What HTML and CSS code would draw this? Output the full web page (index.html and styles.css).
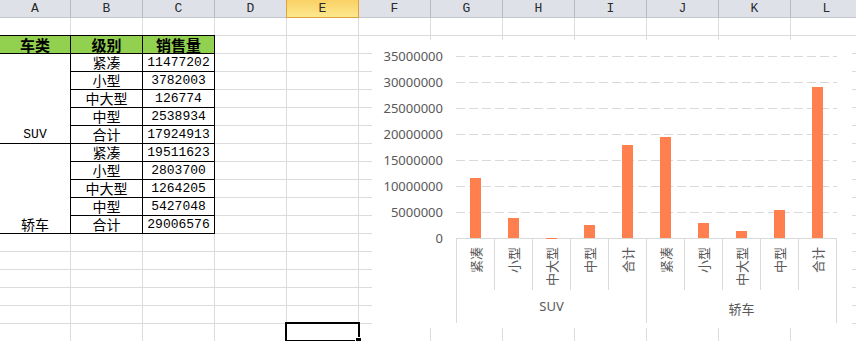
FILE: index.html
```html
<!DOCTYPE html>
<html lang="zh-CN">
<head>
  <meta charset="UTF-8">
  <meta name="viewport" content="width=device-width, initial-scale=1.0">
  <title>销售量</title>
  <link rel="stylesheet" href="styles.css">
</head>
<body>
  <div class="sheet">
    <div class="col-heads">
      <div class="ch first">A</div>
      <div class="ch">B</div>
      <div class="ch">C</div>
      <div class="ch">D</div>
      <div class="ch active">E</div>
      <div class="ch">F</div>
      <div class="ch">G</div>
      <div class="ch">H</div>
      <div class="ch">I</div>
      <div class="ch">J</div>
      <div class="ch">K</div>
      <div class="ch">L</div>
    </div>

    <div class="table">
      <div class="cell head">车类</div>
      <div class="cell head">级别</div>
      <div class="cell head">销售量</div>

      <div class="cell group latin">SUV</div>
      <div class="cell">紧凑</div><div class="cell num">11477202</div>
      <div class="cell">小型</div><div class="cell num">3782003</div>
      <div class="cell">中大型</div><div class="cell num">126774</div>
      <div class="cell">中型</div><div class="cell num">2538934</div>
      <div class="cell">合计</div><div class="cell num">17924913</div>

      <div class="cell group">轿车</div>
      <div class="cell">紧凑</div><div class="cell num">19511623</div>
      <div class="cell">小型</div><div class="cell num">2803700</div>
      <div class="cell">中大型</div><div class="cell num">1264205</div>
      <div class="cell">中型</div><div class="cell num">5427048</div>
      <div class="cell">合计</div><div class="cell num">29006576</div>
    </div>

    <div class="chart">
      <div class="y-axis">
        <span>35000000</span>
        <span>30000000</span>
        <span>25000000</span>
        <span>20000000</span>
        <span>15000000</span>
        <span>10000000</span>
        <span>5000000</span>
        <span>0</span>
      </div>
      <div class="plot-area">
        <div class="plot">
          <div class="slot"><div class="bar" style="height:59.7px"></div></div>
          <div class="slot"><div class="bar" style="height:19.7px"></div></div>
          <div class="slot"><div class="bar" style="height:0.4px"></div></div>
          <div class="slot"><div class="bar" style="height:13.2px"></div></div>
          <div class="slot"><div class="bar" style="height:93.2px"></div></div>
          <div class="slot"><div class="bar" style="height:101.5px"></div></div>
          <div class="slot"><div class="bar" style="height:14.6px"></div></div>
          <div class="slot"><div class="bar" style="height:6.6px"></div></div>
          <div class="slot"><div class="bar" style="height:28.2px"></div></div>
          <div class="slot"><div class="bar" style="height:150.8px"></div></div>
        </div>
        <div class="cats">
          <div class="cat"><span>紧凑</span></div>
          <div class="cat"><span>小型</span></div>
          <div class="cat"><span>中大型</span></div>
          <div class="cat"><span>中型</span></div>
          <div class="cat"><span>合计</span></div>
          <div class="cat"><span>紧凑</span></div>
          <div class="cat"><span>小型</span></div>
          <div class="cat"><span>中大型</span></div>
          <div class="cat"><span>中型</span></div>
          <div class="cat"><span>合计</span></div>
        </div>
        <div class="groups">
          <div class="grp">SUV</div>
          <div class="grp cjk">轿车</div>
        </div>
      </div>
    </div>

    <div class="selected"></div>
  </div>
</body>
</html>
```

FILE: styles.css
```css
body {
  margin: 0;
  overflow: hidden;
  font-family: "Noto Sans CJK SC", sans-serif;
}

.sheet {
  position: relative;
  width: 856px;
  height: 341px;
  overflow: hidden;
  background-color: #fff;
  background-image:
    linear-gradient(to right, transparent 71px, #dadcdd 71px),
    linear-gradient(to bottom, transparent 17px, #dadcdd 17px);
  background-size: 72px 100%, 100% 18px;
  background-position: -1px 0, 0 0;
}

/* column letters */
.col-heads {
  display: flex;
  height: 18px;
}

.ch {
  flex-shrink: 0;
  width: 71px;
  height: 17px;
  border-right: 1px solid #b4bac3;
  border-bottom: 1px solid #c3c8cf;
  background: #dee2e8;
  text-align: center;
  font: 13px/17px "Liberation Mono", monospace;
  color: #2b2b2b;
}

.ch.first {
  width: 70px;
}

.ch.active {
  background: linear-gradient(#f9d165, #fde88e);
  border-bottom-color: #e0a23c;
  border-right-color: #e0a23c;
  box-shadow: -1px 0 0 #e0a23c;
}

/* data table */
.table {
  display: grid;
  grid-template-columns: 71px 72px 72px;
  grid-auto-rows: 18px;
  width: 215px;
  margin-top: 17px;
  border-top: 1px solid #000;
}

.cell {
  box-sizing: border-box;
  border-right: 1px solid #000;
  border-bottom: 1px solid #000;
  background: #fff;
  text-align: center;
  font-size: 14px;
  line-height: 17px;
  color: #000;
}

.cell.head {
  background: #92d050;
  font-size: 15px;
  font-weight: bold;
}

.cell.num {
  font: 13px/18px "Liberation Mono", monospace;
}

.cell.group {
  grid-row: span 5;
  display: flex;
  align-items: flex-end;
  justify-content: center;
}

.cell.latin {
  font: 13px/17px "Liberation Mono", monospace;
}

/* chart */
.chart {
  position: absolute;
  left: 372px;
  top: 40px;
  width: 480px;
  height: 288px;
  box-sizing: border-box;
  padding-top: 16px;
  display: flex;
  background: #fff;
  color: #595959;
}

.y-axis {
  width: 71px;
  height: 195px;
  margin-top: -6.5px;
  margin-right: 13px;
  display: flex;
  flex-direction: column;
  justify-content: space-between;
  align-items: flex-end;
  font: 13px/13px "Noto Sans", sans-serif;
}

.plot-area {
  width: 381px;
}

.plot {
  height: 182px;
  display: flex;
  align-items: flex-end;
  background:
    linear-gradient(to right, transparent 9px, #fff 9px) 0 0 / 13px 100%,
    linear-gradient(#d9d9d9 1px, transparent 1px) 0 0 / 100% 26px;
}

.slot {
  flex: 1;
  display: flex;
  justify-content: center;
}

.bar {
  width: 11px;
  background: #ff7f4f;
}

.cats {
  display: flex;
  height: 51px;
  border-top: 1px solid #d9d9d9;
}

.cat {
  flex: 1;
  display: flex;
  justify-content: center;
  align-items: flex-start;
  padding-top: 8px;
  border-left: 1px solid #d9d9d9;
  font-size: 13px;
}

.cat:last-child {
  border-right: 1px solid #d9d9d9;
}

.cat span {
  display: inline-block;
  writing-mode: vertical-rl;
  text-orientation: sideways;
  transform: rotate(180deg);
  line-height: 15px;
}

.groups {
  display: flex;
  height: 33px;
}

.grp {
  flex: 1;
  border-left: 1px solid #d9d9d9;
  text-align: center;
  font: 13px/33px "Noto Sans", "Noto Sans CJK SC", sans-serif;
}

.grp.cjk {
  line-height: 38px;
}

.grp:last-child {
  border-right: 1px solid #d9d9d9;
}

/* active cell */
.selected {
  position: absolute;
  left: 285px;
  top: 322px;
  width: 71px;
  height: 16px;
  border: 2px solid #000;
}

.selected::after {
  content: "";
  position: absolute;
  right: -4px;
  bottom: -4px;
  width: 5px;
  height: 5px;
  background: #000;
  border: 1px solid #fff;
}
```
